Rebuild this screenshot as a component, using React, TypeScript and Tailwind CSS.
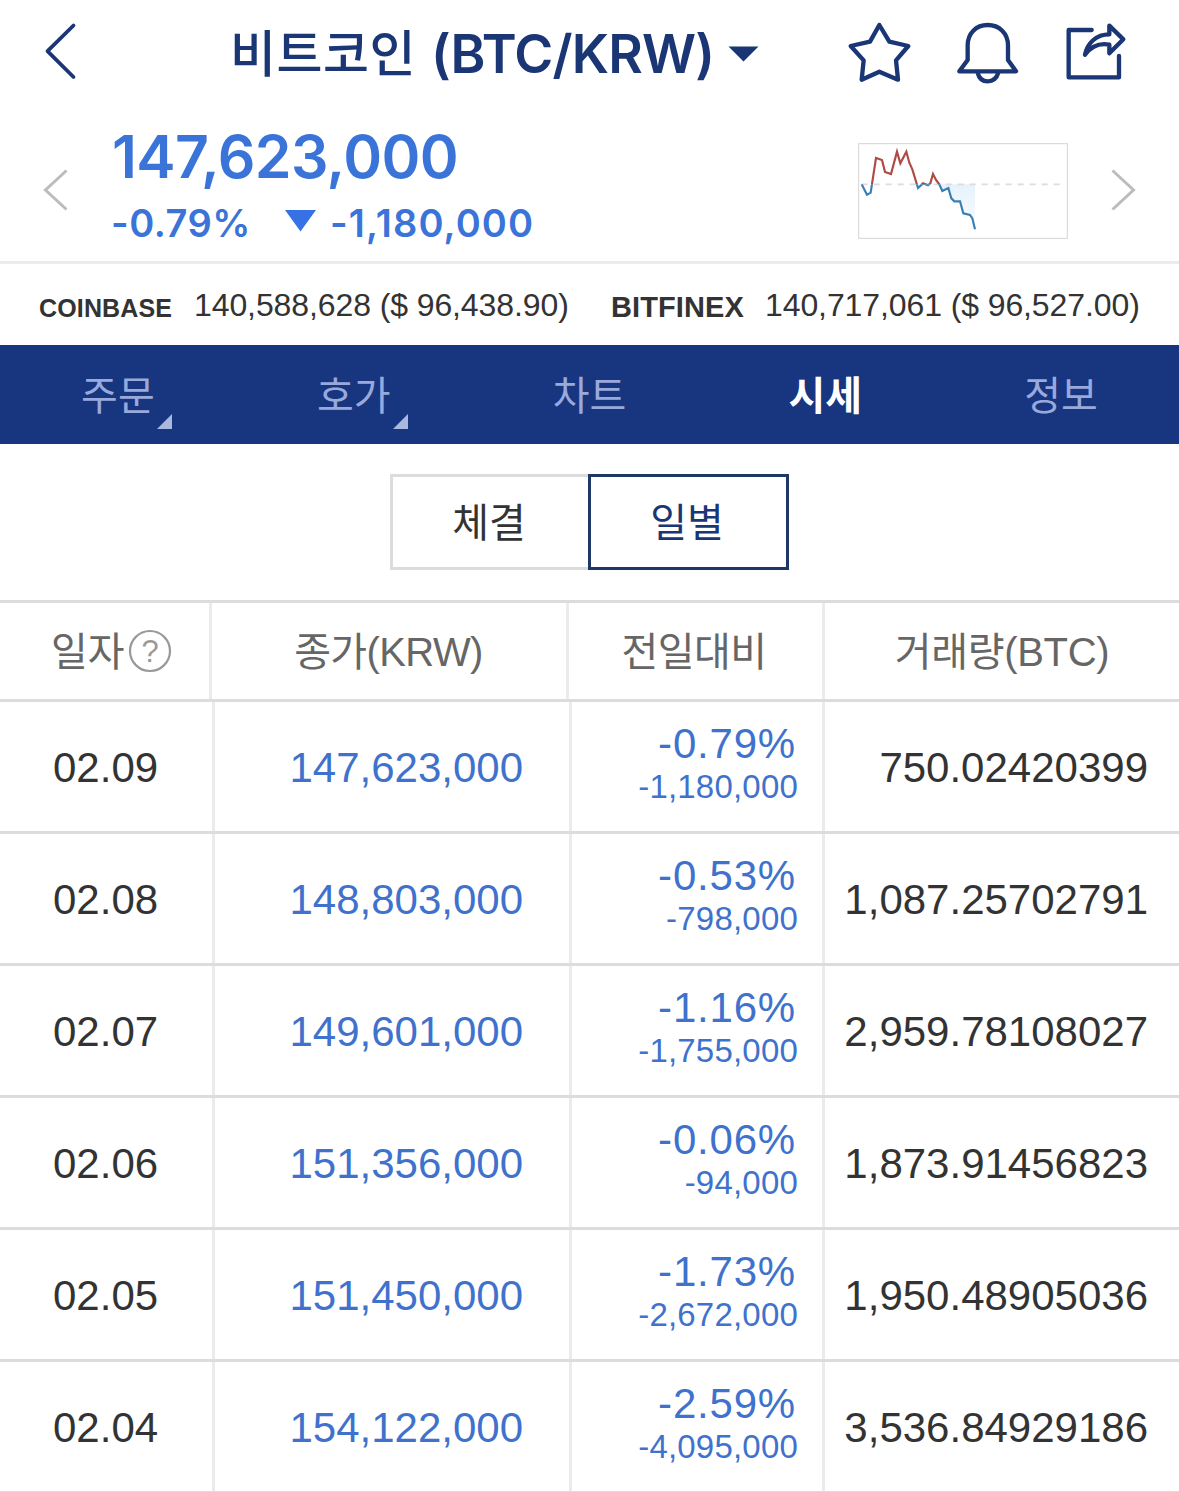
import { useState } from 'react';

const TABS = [
  { label: '주문', more: true },
  { label: '호가', more: true },
  { label: '차트', more: false },
  { label: '시세', more: false },
  { label: '정보', more: false },
];

const ROWS = [
  { date: '02.09', close: '147,623,000', rate: '-0.79%', diff: '-1,180,000', volume: '750.02420399' },
  { date: '02.08', close: '148,803,000', rate: '-0.53%', diff: '-798,000', volume: '1,087.25702791' },
  { date: '02.07', close: '149,601,000', rate: '-1.16%', diff: '-1,755,000', volume: '2,959.78108027' },
  { date: '02.06', close: '151,356,000', rate: '-0.06%', diff: '-94,000', volume: '1,873.91456823' },
  { date: '02.05', close: '151,450,000', rate: '-1.73%', diff: '-2,672,000', volume: '1,950.48905036' },
  { date: '02.04', close: '154,122,000', rate: '-2.59%', diff: '-4,095,000', volume: '3,536.84929186' },
];

const CHART_POINTS =
  '65,163 81,194 92,188 108,84 126,90 135,126 153,132 171,65 181,100 199,65 208,98 217,118 234,174 249,160 264,166 271,160 279,132 288,150 298,163 307,183 325,174 334,205 343,214 360,214 370,250 390,255 397,265 405,298';

function Header() {
  return (
    <header className="flex h-[107px] items-start text-[#1b3674]">
      <svg className="mt-[20px] ml-[40px] h-[62px] w-[40px]" viewBox="0 0 40 62" fill="none" stroke="currentColor" strokeWidth="3.8" strokeLinecap="round" strokeLinejoin="round">
        <path d="M33.5 5.5 7.5 31.2 33.5 57" />
      </svg>
      <h1 className="ml-[150px] flex items-center whitespace-nowrap leading-[107px]">
        <span className="w-[185px] pb-[8px] font-['Noto_Sans_CJK_KR',sans-serif] text-[50px] font-medium leading-[99px] tracking-[0.5px]">비트코인</span>
        <span className="ml-[16px] pt-[1px] font-['Inter',sans-serif] text-[53px] font-semibold tracking-[-0.8px]">(BTC/KRW)</span>
        <svg className="ml-[14px] h-[16px] w-[31px]" viewBox="0 0 31 16" fill="currentColor">
          <path d="M0.5 0.5h30L15.5 15.5z" />
        </svg>
      </h1>
      <div className="mt-[20px] mr-[50px] ml-auto flex gap-[42px]">
        <svg className="h-[64px] w-[66px]" viewBox="48 60 198 192" fill="none" stroke="currentColor" strokeWidth="13" strokeLinejoin="round">
          <path d="M148 75 178 125 235 138 198 181 204 239 148 215 95 239 101 181 62 138 120 125z" />
        </svg>
        <svg className="h-[64px] w-[67px]" viewBox="372 60 201 192" fill="none" stroke="currentColor" strokeWidth="13" strokeLinejoin="round">
          <path d="M388 214 413 180V136C413 100 438 75 473 75S534 100 534 136V180L558 214z" />
          <path d="M443 218C447 235 458 244 473 244S500 235 505 218" />
        </svg>
        <svg className="h-[64px] w-[66px]" viewBox="699 60 198 192" fill="none" stroke="currentColor" strokeWidth="13" strokeLinecap="round" strokeLinejoin="round">
          <path d="M785 90H716V232H867V168" />
          <path d="M838 77 880 118 838 160V134C806 128 783 140 765 164C772 130 798 103 838 103z" />
        </svg>
      </div>
    </header>
  );
}

function MiniChart() {
  return (
    <svg className="mt-[2px] h-[96px] w-[210px]" viewBox="54 39 630 288" fill="none">
      <defs>
        <clipPath id="above"><rect x="54" y="39" width="633" height="124" /></clipPath>
        <clipPath id="below"><rect x="54" y="163" width="633" height="164" /></clipPath>
        <linearGradient id="fall" x1="0" y1="0" x2="0" y2="1">
          <stop offset="0" stopColor="#e6f2fb" />
          <stop offset="1" stopColor="#f8fcff" />
        </linearGradient>
      </defs>
      <rect x="56" y="41" width="626" height="284" stroke="#d4d4d4" strokeWidth="3" />
      <path d="M298 163 307 183 325 174 334 205 343 214 360 214 370 250 390 255 405 298V163z" fill="url(#fall)" />
      <path d="M65 163H665" stroke="#dcdcdc" strokeWidth="5" strokeDasharray="18 18" />
      <polyline points={CHART_POINTS} stroke="#b04a44" strokeWidth="6.5" clipPath="url(#above)" />
      <polyline points={CHART_POINTS} stroke="#3b7fb2" strokeWidth="6.5" clipPath="url(#below)" />
    </svg>
  );
}

function PriceSummary() {
  return (
    <section className="flex h-[157px] items-center border-b-[3px] border-[#ebebeb] pt-[11px]">
      <svg className="ml-[40px] h-[44px] w-[30px]" viewBox="0 0 30 44" fill="none" stroke="#bcbcbc" strokeWidth="3">
        <path d="M26.5 2.5 5.5 22 26.5 41.5" />
      </svg>
      <div className="ml-[42px] font-['Inter',sans-serif] text-[#3b74d8]">
        <p className="text-[59px] font-semibold leading-[66px] tracking-[-0.6px]">147,623,000</p>
        <div className="flex items-center text-[38px] font-semibold leading-[66px]">
          <span className="-ml-[1px] w-[138px] tracking-[0.5px]">-0.79%</span>
          <svg className="mb-[3px] ml-[36px] h-[22px] w-[31px]" viewBox="0 0 31 22" fill="#3672e6">
            <path d="M0 0h31L15.5 21.5z" />
          </svg>
          <span className="ml-[14px] tracking-[1.1px]">-1,180,000</span>
        </div>
      </div>
      <div className="mr-[40px] ml-auto flex items-center gap-[41px]">
        <MiniChart />
        <svg className="h-[44px] w-[30px]" viewBox="0 0 30 44" fill="none" stroke="#bcbcbc" strokeWidth="3">
          <path d="M3.5 2.5 24.5 22 3.5 41.5" />
        </svg>
      </div>
    </section>
  );
}

function Exchanges() {
  return (
    <section className="flex h-[81px] items-start pl-[39px] whitespace-nowrap text-[#333]">
      <b className="w-[155px] text-[25px] leading-[88px] tracking-[0.15px]">COINBASE</b>
      <span className="w-[417px] text-[32px] leading-[82px] tracking-[-0.1px]">140,588,628 ($ 96,438.90)</span>
      <b className="w-[154px] text-[29px] leading-[86px] tracking-[0.1px]">BITFINEX</b>
      <span className="text-[32px] leading-[82px] tracking-[-0.1px]">140,717,061 ($ 96,527.00)</span>
    </section>
  );
}

export default function App() {
  const [tab, setTab] = useState('시세');
  const [mode, setMode] = useState('일별');

  return (
    <div className="h-[1492px] w-[1179px] overflow-hidden bg-white font-['Liberation_Sans','Noto_Sans_CJK_KR',sans-serif]">
      <Header />
      <PriceSummary />
      <Exchanges />

      <nav className="grid h-[99px] grid-cols-5 bg-[#18357f]">
        {TABS.map((t) => (
          <button
            key={t.label}
            onClick={() => setTab(t.label)}
            className={`relative pt-[3px] text-[40px] leading-[96px] ${tab === t.label ? 'font-bold text-white' : 'text-[#98a9dc]'}`}
          >
            {t.label}
            {t.more && (
              <svg className="absolute right-[64px] bottom-[15px] h-[15px] w-[15px]" viewBox="0 0 15 15" fill="#a9b8dc">
                <path d="M15 0v15H0z" />
              </svg>
            )}
          </button>
        ))}
      </nav>

      <div className="flex h-[156px] justify-center pt-[30px]">
        {['체결', '일별'].map((m) => (
          <button
            key={m}
            onClick={() => setMode(m)}
            className={`h-[96px] border-[3px] pt-[3px] pr-[3px] text-[40px] leading-[87px] ${m === '체결' ? 'w-[198px] border-r-0' : 'w-[201px]'} ${mode === m ? 'border-[#1f3766] text-[#1b3674]' : 'border-[#dcdcdc] text-[#333]'}`}
          >
            {m}
          </button>
        ))}
      </div>

      {/* Daily price table */}
      <div className="flex h-[102px] border-y-[3px] border-[#dcdcdc] text-[40px] leading-[99px] whitespace-nowrap text-[#666]">
        <div className="flex w-[212px] items-center border-r-[3px] border-[#ebebeb] pl-[51px]">
          <span className="pt-[3px] leading-[93px]">일자</span>
          <svg className="ml-[3px] h-[44px] w-[44px]" viewBox="0 0 44 44" fill="none">
            <circle cx="22" cy="22" r="20" stroke="#999" strokeWidth="2.2" />
            <text x="22" y="33" textAnchor="middle" fontSize="31" fill="#999">?</text>
          </svg>
        </div>
        <div className="w-[357px] border-r-[3px] border-[#ebebeb] pr-[1px] text-center tracking-[-0.6px]">종가(KRW)</div>
        <div className="w-[256px] border-r-[3px] border-[#ebebeb] pr-[3px] text-center tracking-[-0.6px]">전일대비</div>
        <div className="flex-1 text-center tracking-[-0.3px]">거래량(BTC)</div>
      </div>
      {ROWS.map((r) => (
        <div key={r.date} className="flex h-[132px] border-b-[3px] border-[#dcdcdc] text-[42px] leading-[131px] text-[#333]">
          <div className="w-[215px] border-r-[3px] border-[#ebebeb] pl-[53px]">{r.date}</div>
          <div className="w-[357px] border-r-[3px] border-[#ebebeb] pr-[46px] text-right text-[#3f72cc]">{r.close}</div>
          <div className="w-[253px] border-r-[3px] border-[#ebebeb] pt-[20px] pr-[24px] text-right leading-[43px] text-[#3f72cc]">
            <p className="pr-[2px] tracking-[0.8px]">{r.rate}</p>
            <p className="text-[33px] tracking-[0.2px]">{r.diff}</p>
          </div>
          <div className="flex-1 pr-[31px] text-right">{r.volume}</div>
        </div>
      ))}
    </div>
  );
}
